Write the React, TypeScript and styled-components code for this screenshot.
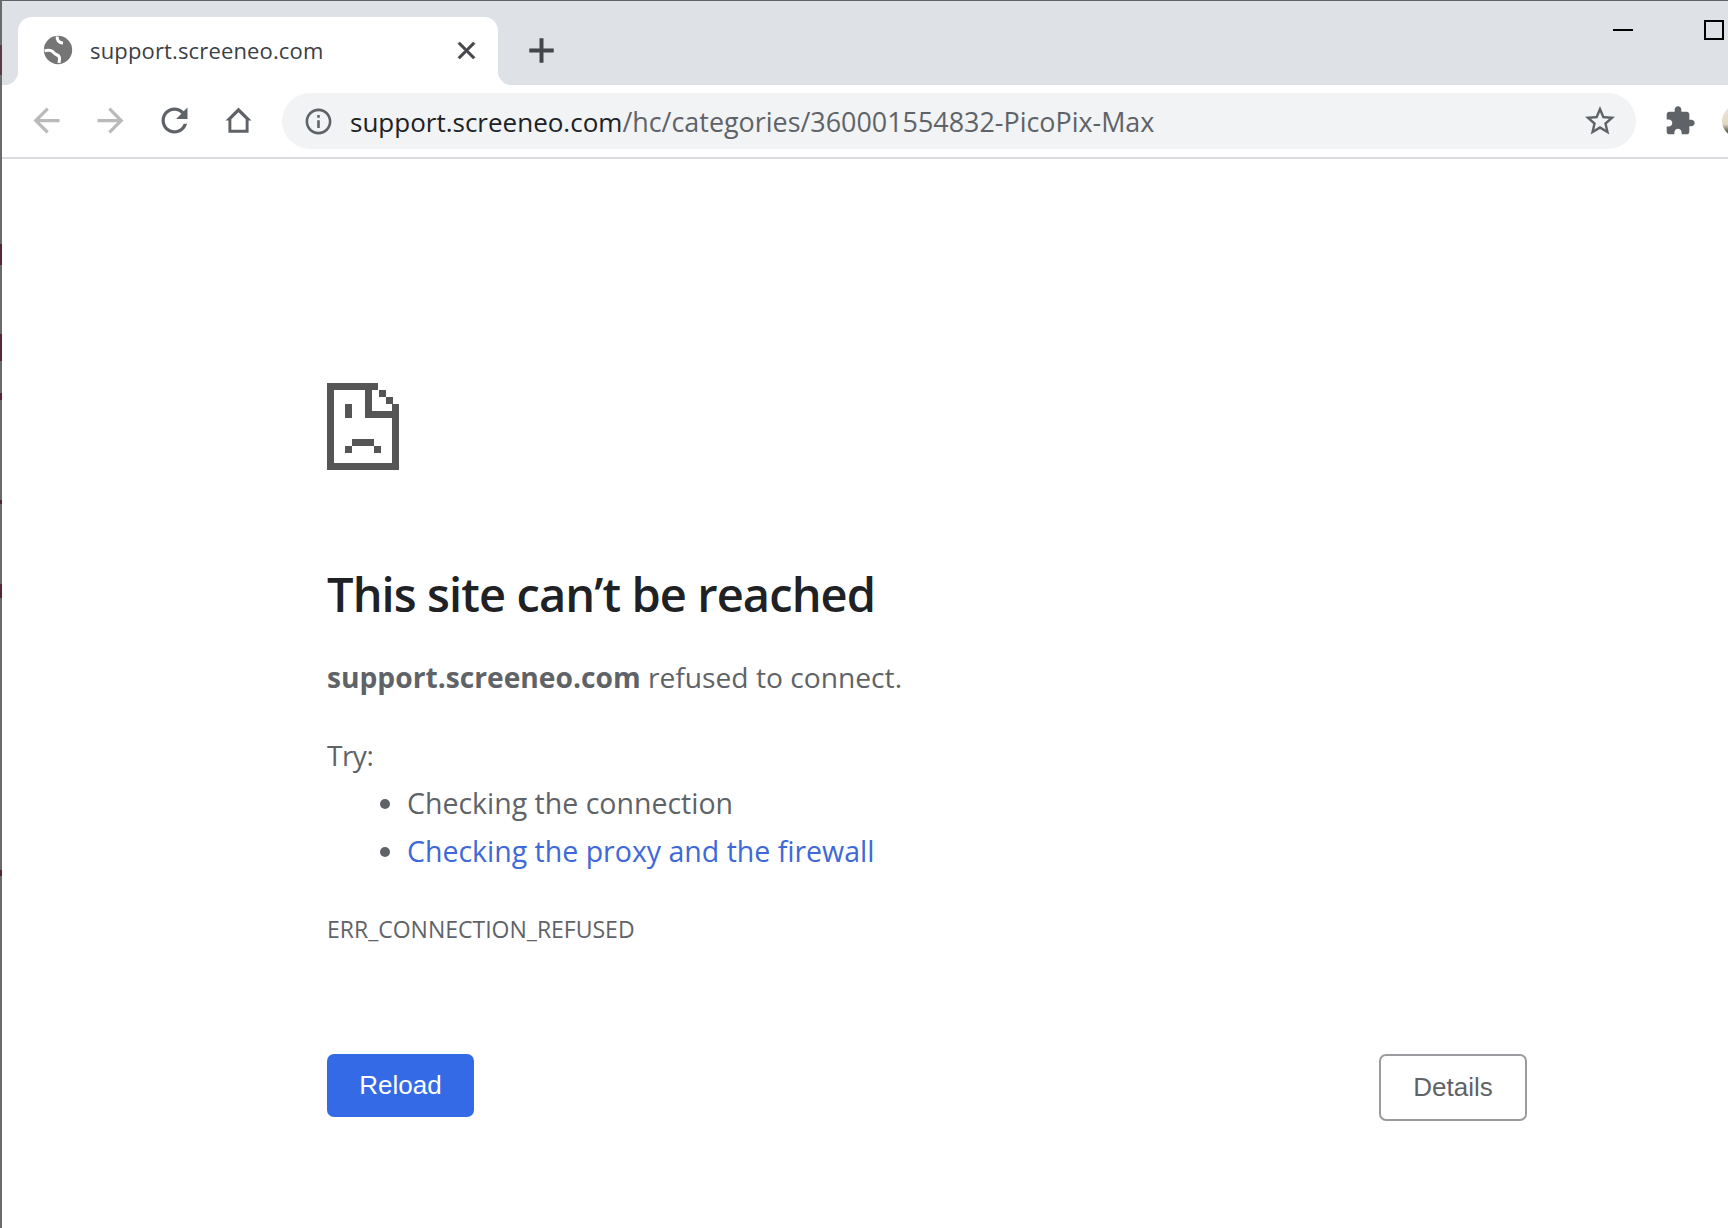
import React from 'react';
import styled, { createGlobalStyle } from 'styled-components';

const GlobalStyle = createGlobalStyle`
  html, body {
    margin: 0;
    padding: 0;
    background: #fff;
    overflow: hidden;
  }
`;

const uiFont = `'Open Sans', 'Noto Sans', Arial, sans-serif`;

const Window = styled.div`
  display: flex;
  width: 1728px;
  height: 1228px;
  overflow: hidden;
  font-family: ${uiFont};
`;

// 2px edge of the window behind, with the maroon bits that show through
const Rail = styled.div`
  flex: 0 0 2px;
  background: linear-gradient(
    to bottom,
    #6a6a6a 0 45px,
    #5c3a44 45px 75px,
    #6a6a6a 75px 244px,
    #5a2438 244px 265px,
    #6a6a6a 265px 334px,
    #5a2438 334px 361px,
    #6a6a6a 361px 393px,
    #5a2438 393px 400px,
    #6a6a6a 400px 500px,
    #5a2438 500px 504px,
    #6a6a6a 504px 584px,
    #5a2438 584px 598px,
    #6a6a6a 598px 870px,
    #5a2438 870px 876px,
    #6a6a6a 876px 1228px
  );
`;

const Main = styled.div`
  flex: 1;
  min-width: 0;
  display: flex;
  flex-direction: column;
`;

const TabStrip = styled.div`
  flex: 0 0 85px;
  box-sizing: border-box;
  display: flex;
  align-items: flex-end;
  padding-left: 16px;
  background: #dee1e6;
  border-top: 1px solid #5f6368;
`;

const Tab = styled.div`
  position: relative;
  box-sizing: border-box;
  width: 480px;
  height: 68px;
  display: flex;
  align-items: center;
  padding: 0 17px 2px 26px;
  background: #fff;
  border-radius: 14px 14px 0 0;

  &::before,
  &::after {
    content: '';
    position: absolute;
    bottom: 0;
    width: 14px;
    height: 14px;
  }
  &::before {
    left: -14px;
    background: radial-gradient(circle at 0 0, #dee1e6 14px, #fff 14.5px);
  }
  &::after {
    right: -14px;
    background: radial-gradient(circle at 100% 0, #dee1e6 14px, #fff 14.5px);
  }
`;

const TabIcon = styled.svg`
  flex: none;
  width: 34px;
  height: 34px;
  margin-left: -3px;
`;

const TabTitle = styled.span`
  flex: 1;
  margin-left: 15px;
  font-size: 22px;
  letter-spacing: 0.15px;
  color: #3c4043;
`;

const CloseIcon = styled.svg`
  flex: none;
  width: 29px;
  height: 29px;
  fill: #45474a;
  stroke: #45474a;
  stroke-width: 0.6;
`;

const NewTabIcon = styled.svg`
  flex: none;
  width: 41px;
  height: 41px;
  margin: 0 0 14px 23px;
  fill: #45474a;
  stroke: #45474a;
  stroke-width: 0.3;
`;

const WindowControls = styled.div`
  margin-left: auto;
  align-self: flex-start;
  display: flex;
  align-items: center;
  gap: 71px;
  height: 20px;
  margin-top: 19px;
  padding-right: 4px;
`;

const MinimizeMark = styled.div`
  width: 20px;
  height: 2px;
  background: #000;
`;

const MaximizeMark = styled.div`
  box-sizing: border-box;
  width: 20px;
  height: 20px;
  border: 2px solid #000;
`;

const Toolbar = styled.div`
  flex: 0 0 74px;
  box-sizing: border-box;
  display: flex;
  align-items: center;
  padding: 0 0 0 12px;
  background: #fff;
  border-bottom: 2px solid #dadce0;
`;

const NavSlot = styled.div<{ $dim?: boolean }>`
  flex: 0 0 64px;
  display: flex;
  justify-content: center;
  margin-bottom: 1px;
  color: ${(p) => (p.$dim ? '#bababa' : '#5f6368')};
`;

const NavIcon = styled.svg`
  width: 39px;
  height: 39px;
  fill: currentColor;
`;

const Omnibox = styled.div`
  flex: 0 0 1354px;
  box-sizing: border-box;
  height: 56px;
  margin-left: 12px;
  display: flex;
  align-items: center;
  padding: 0 18px 0 21px;
  background: #f1f3f4;
  border-radius: 28px;
`;

const InfoIcon = styled.svg`
  flex: none;
  width: 31px;
  height: 31px;
  fill: #5f6368;
`;

const Url = styled.div`
  flex: 1;
  margin-left: 16px;
  font-size: 26.9px;
  white-space: nowrap;
  color: #5f6368;

  b {
    font-size: 26px;
    font-weight: 400;
    color: #202124;
  }
`;

const StarIcon = styled.svg`
  flex: none;
  width: 36px;
  height: 36px;
  fill: #5f6368;
`;

const PuzzleIcon = styled.svg`
  flex: none;
  width: 32px;
  height: 32px;
  margin-left: 28px;
  fill: #5f6368;
`;

const Avatar = styled.div`
  flex: none;
  width: 32px;
  height: 32px;
  margin-left: 26px;
  border-radius: 50%;
  background: linear-gradient(to bottom, #efe9dc 0%, #e2d9c4 60%, #2e2a26 92%);
`;

const Content = styled.main`
  flex: 1;
  box-sizing: border-box;
  display: flex;
  flex-direction: column;
  width: 1525px;
  padding: 224px 0 0 325px;
  color: #5f6368;
`;

const SadFile = styled.svg`
  display: block;
  width: 72px;
  height: 87px;
  fill: #555;
`;

const Heading = styled.h1`
  margin: 94px 0 0;
  font-size: 47px;
  line-height: 60px;
  font-weight: 600;
  letter-spacing: -0.9px;
  color: #202124;
`;

const Summary = styled.p`
  margin: 33px 0 0;
  font-size: 28.2px;
  line-height: 40px;

  strong {
    font-weight: 700;
  }
`;

const TryLabel = styled.p`
  margin: 38px 0 0;
  font-size: 28px;
  line-height: 40px;
  letter-spacing: -0.5px;
`;

const Suggestions = styled.ul`
  margin: 4px 0 0;
  padding: 0 0 0 80px;
  font-size: 28.5px;
  line-height: 48px;

  li::marker {
    color: #5f6368;
  }
`;

const Suggestion = styled.li<{ $link?: boolean }>`
  color: ${(p) => (p.$link ? '#3f68d8' : '#5f6368')};
`;

const ErrorCode = styled.div`
  margin-top: 38px;
  font-size: 23px;
  line-height: 32px;
  text-transform: uppercase;
`;

const Actions = styled.div`
  display: flex;
  justify-content: space-between;
  align-items: flex-start;
  margin-top: 109px;
`;

const ActionButton = styled.button<{ $primary?: boolean }>`
  box-sizing: border-box;
  width: ${(p) => (p.$primary ? '147px' : '148px')};
  height: ${(p) => (p.$primary ? '63px' : '67px')};
  border-radius: 7px;
  border: ${(p) => (p.$primary ? 'none' : '2px solid #9a9b9e')};
  background: ${(p) => (p.$primary ? '#356ae6' : '#fff')};
  color: ${(p) => (p.$primary ? '#fff' : '#5f6368')};
  font-family: 'Liberation Sans', Arial, sans-serif;
  font-size: 26px;
  padding: 0;
`;

const pixels: [number, number, number, number][] = [
  [0, 0, 51, 7],
  [0, 0, 7, 87],
  [0, 80, 72, 7],
  [65, 21, 7, 66],
  [38, 0, 7, 35],
  [38, 28, 34, 7],
  [52, 7, 7, 7],
  [59, 14, 7, 7],
  [18, 21, 7, 14],
  [25, 56, 22, 7],
  [18, 63, 7, 7],
  [47, 63, 7, 7],
];

const App: React.FC = () => (
  <>
    <GlobalStyle />
    <Window>
      <Rail />
      <Main>
        <TabStrip>
          <Tab>
            <TabIcon viewBox="0 0 24 24">
              <circle cx="12" cy="12" r="10" fill="#757575" />
              <path
                d="M11.5 2.5c-.5 2.5 1 4.2 4 4.7M2.5 12.5c2.5-.5 5-.5 6.3 1.2 1.5 2 3.7 1.5 4.2 3.5.3 1.3 0 2.5-.3 4"
                fill="none"
                stroke="#fff"
                strokeWidth="2.2"
              />
            </TabIcon>
            <TabTitle>support.screeneo.com</TabTitle>
            <CloseIcon viewBox="0 0 24 24">
              <path d="M19 6.41L17.59 5 12 10.59 6.41 5 5 6.41 10.59 12 5 17.59 6.41 19 12 13.41 17.59 19 19 17.59 13.41 12z" />
            </CloseIcon>
          </Tab>
          <NewTabIcon viewBox="0 0 24 24">
            <path d="M19 13h-6v6h-2v-6H5v-2h6V5h2v6h6v2z" />
          </NewTabIcon>
          <WindowControls>
            <MinimizeMark />
            <MaximizeMark />
          </WindowControls>
        </TabStrip>

        <Toolbar>
          <NavSlot $dim>
            <NavIcon viewBox="0 0 24 24">
              <path d="M20 11H7.83l5.59-5.59L12 4l-8 8 8 8 1.41-1.41L7.83 13H20v-2z" />
            </NavIcon>
          </NavSlot>
          <NavSlot $dim>
            <NavIcon viewBox="0 0 24 24">
              <path d="M12 4l-1.41 1.41L16.17 11H4v2h12.17l-5.58 5.59L12 20l8-8z" />
            </NavIcon>
          </NavSlot>
          <NavSlot>
            <NavIcon viewBox="0 0 24 24">
              <path d="M17.65 6.35C16.2 4.9 14.21 4 12 4c-4.42 0-7.99 3.58-7.99 8s3.57 8 7.99 8c3.73 0 6.84-2.55 7.73-6h-2.08c-.82 2.33-3.04 4-5.65 4-3.31 0-6-2.69-6-6s2.69-6 6-6c1.66 0 3.14.69 4.22 1.78L13 11h7V4l-2.35 2.35z" />
            </NavIcon>
          </NavSlot>
          <NavSlot>
            <NavIcon viewBox="0 0 24 24">
              <path
                fillRule="evenodd"
                d="M12 4l8 8h-1.8v7.5H5.8V12H4zM12 6.9l-4.4 4.4v6.4h8.8v-6.4z"
              />
            </NavIcon>
          </NavSlot>
          <Omnibox>
            <InfoIcon viewBox="0 0 24 24">
              <path d="M11 7h2v2h-2zm0 4h2v6h-2zm1-9C6.48 2 2 6.48 2 12s4.48 10 10 10 10-4.48 10-10S17.52 2 12 2zm0 18c-4.41 0-8-3.59-8-8s3.59-8 8-8 8 3.59 8 8-3.59 8-8 8z" />
            </InfoIcon>
            <Url>
              <b>support.screeneo.com</b>/hc/categories/360001554832-PicoPix-Max
            </Url>
            <StarIcon viewBox="0 0 24 24">
              <path d="M22 9.24l-7.19-.62L12 2 9.19 8.63 2 9.24l5.46 4.73L5.82 21 12 17.27 18.18 21l-1.63-7.03L22 9.24zM12 15.4l-3.76 2.27 1-4.28-3.32-2.88 4.38-.38L12 6.1l1.71 4.04 4.38.38-3.32 2.88 1 4.28L12 15.4z" />
            </StarIcon>
          </Omnibox>
          <PuzzleIcon viewBox="0 0 24 24">
            <path d="M20.5 11H19V7c0-1.1-.9-2-2-2h-4V3.5C13 2.12 11.88 1 10.5 1S8 2.12 8 3.5V5H4c-1.1 0-1.99.9-1.99 2v3.8H3.5c1.49 0 2.7 1.21 2.7 2.7s-1.21 2.7-2.7 2.7H2V20c0 1.1.9 2 2 2h3.8v-1.5c0-1.49 1.21-2.7 2.7-2.7 1.49 0 2.7 1.21 2.7 2.7V22H17c1.1 0 2-.9 2-2v-4h1.5c1.38 0 2.5-1.12 2.5-2.5S21.88 11 20.5 11z" />
          </PuzzleIcon>
          <Avatar />
        </Toolbar>

        <Content>
          <SadFile viewBox="0 0 72 87" shapeRendering="crispEdges">
            {pixels.map(([x, y, w, h], i) => (
              <rect key={i} x={x} y={y} width={w} height={h} />
            ))}
          </SadFile>
          <Heading>This site can’t be reached</Heading>
          <Summary>
            <strong>support.screeneo.com</strong> refused to connect.
          </Summary>
          <TryLabel>Try:</TryLabel>
          <Suggestions>
            <Suggestion>Checking the connection</Suggestion>
            <Suggestion $link>Checking the proxy and the firewall</Suggestion>
          </Suggestions>
          <ErrorCode>ERR_CONNECTION_REFUSED</ErrorCode>
          <Actions>
            <ActionButton $primary>Reload</ActionButton>
            <ActionButton>Details</ActionButton>
          </Actions>
        </Content>
      </Main>
    </Window>
  </>
);

export default App;
